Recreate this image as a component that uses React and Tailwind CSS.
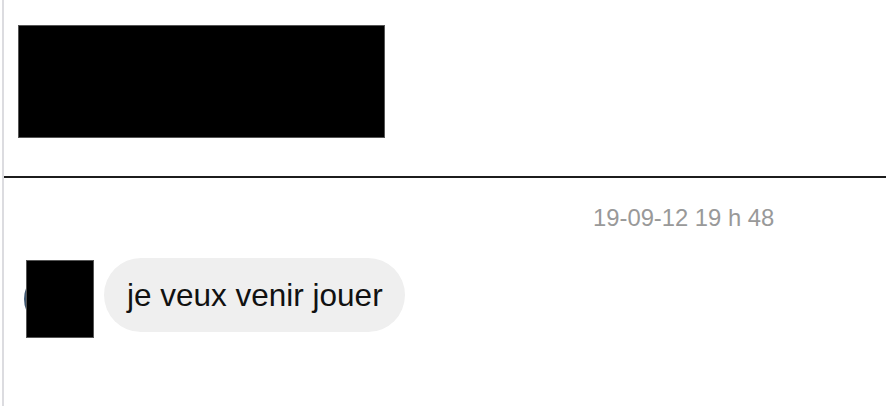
import React from 'react';

const App = () => {
  return (
    <div className="w-[886px] h-[406px] bg-white overflow-hidden" style={{ fontFamily: '"Liberation Sans", Arial, sans-serif' }}>
      <div className="ml-[2px] h-full border-l-2 border-[#dcdce0]">
        {/* en-tête masqué */}
        <div className="h-[176px] pt-[25px] pl-[14px]">
          <div className="w-[367px] h-[113px] bg-black border border-[#555]" />
        </div>
        <div className="h-[2px] bg-[#1c1c1c]" />

        {/* horodatage */}
        <div className="mt-[26px] pl-[589px] text-[23.8px] leading-[27px] text-[#999999]">19-09-12 19 h 48</div>

        {/* message */}
        <div className="mt-[27px] flex items-start">
          <div className="relative ml-[20px] w-[72px] h-[78px] mt-[2px] shrink-0">
            <div className="absolute left-0 top-[9px] w-[60px] h-[60px] rounded-full bg-[#3d5670]" />
            <div className="absolute left-[2px] top-0 w-[68px] h-[78px] bg-black border border-[#555]" />
          </div>
          <div className="ml-[8px] h-[74px] w-[301px] pl-[23px] rounded-full bg-[#efefef] text-[31.5px] leading-[74px] text-[#111] whitespace-nowrap">
            je veux venir jouer
          </div>
        </div>
      </div>
    </div>
  );
};

export default App;
